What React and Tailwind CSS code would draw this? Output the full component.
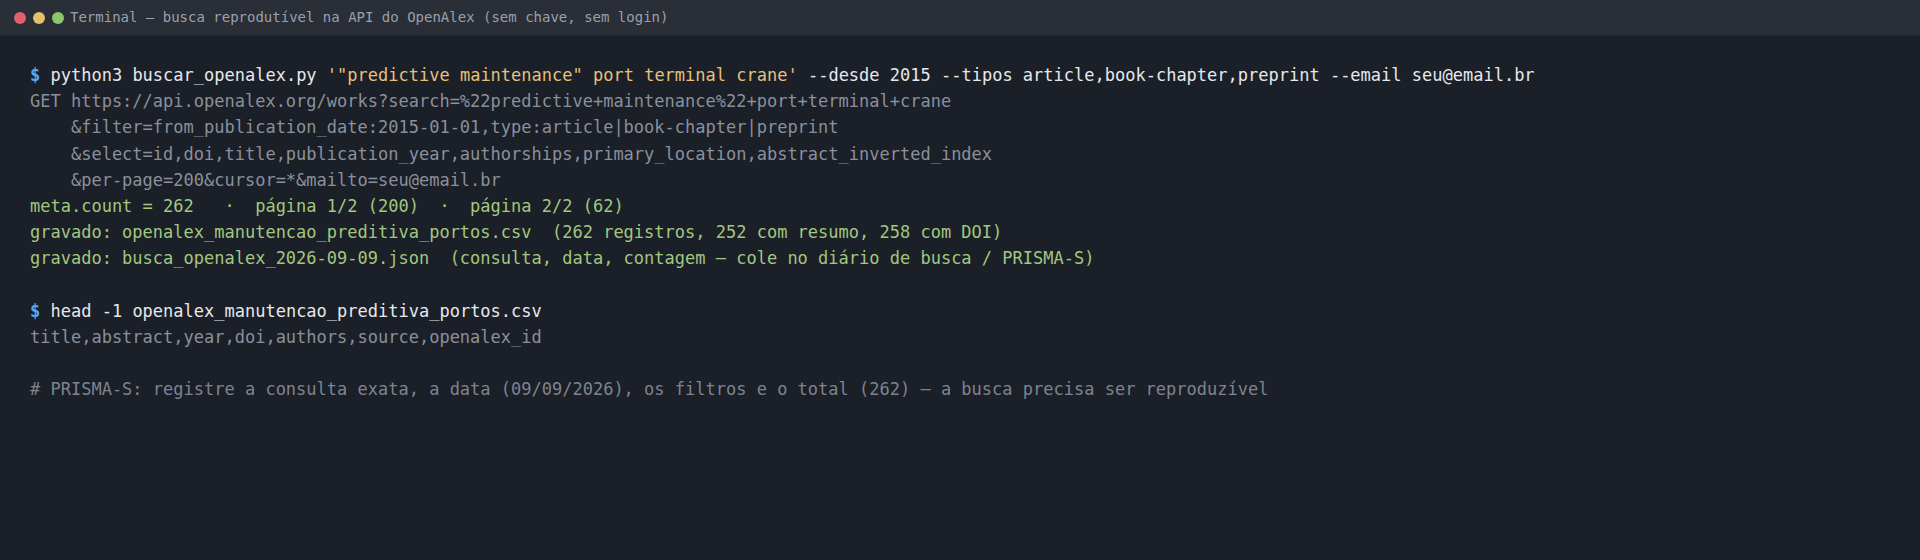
const mono = { fontFamily: '"DejaVu Sans Mono", "Liberation Mono", monospace' };

const Prompt = ({ children }) => (
  <div>
    <span className="text-[#5aa9e6] font-bold">$</span>{' '}
    <span className="text-[#e6e8eb]">{children}</span>
  </div>
);

export default function App() {
  return (
    <div className="w-[1920px] h-[560px] bg-[#1b1f27] flex flex-col" style={mono}>
      <div className="h-[36px] bg-[#2a2e37] border-b border-[#23272f] flex items-center pl-[14px] gap-[7px]">
        <span className="w-[12px] h-[12px] rounded-full bg-[#e0606e]" />
        <span className="w-[12px] h-[12px] rounded-full bg-[#e5bf69]" />
        <span className="w-[12px] h-[12px] rounded-full bg-[#8fc46f]" />
        <span className="ml-[-1px] text-[14px] text-[#9aa0ab]">
          Terminal — busca reprodutível na API do OpenAlex (sem chave, sem login)
        </span>
      </div>
      <div className="pt-[26px] pl-[30px] text-[17px] leading-[26.2px] whitespace-pre">
        <Prompt>
          python3 buscar_openalex.py{' '}
          <span className="text-[#e5c07b]">'"predictive maintenance" port terminal crane'</span>
          {' '}--desde 2015 --tipos article,book-chapter,preprint --email seu@email.br
        </Prompt>
        <div className="text-[#8a909b]">
          <div>GET https://api.openalex.org/works?search=%22predictive+maintenance%22+port+terminal+crane</div>
          <div>    &filter=from_publication_date:2015-01-01,type:article|book-chapter|preprint</div>
          <div>    &select=id,doi,title,publication_year,authorships,primary_location,abstract_inverted_index</div>
          <div>    &per-page=200&cursor=*&mailto=seu@email.br</div>
        </div>
        <div className="text-[#a2c77f]">
          <div>meta.count = 262   ·  página 1/2 (200)  ·  página 2/2 (62)</div>
          <div>gravado: openalex_manutencao_preditiva_portos.csv  (262 registros, 252 com resumo, 258 com DOI)</div>
          <div>gravado: busca_openalex_2026-09-09.json  (consulta, data, contagem — cole no diário de busca / PRISMA-S)</div>
        </div>
        <div> </div>
        <Prompt>head -1 openalex_manutencao_preditiva_portos.csv</Prompt>
        <div className="text-[#8a909b]">title,abstract,year,doi,authors,source,openalex_id</div>
        <div> </div>
        <div className="text-[#7d8490]">
          # PRISMA-S: registre a consulta exata, a data (09/09/2026), os filtros e o total (262) — a busca precisa ser reproduzível
        </div>
      </div>
    </div>
  );
}
